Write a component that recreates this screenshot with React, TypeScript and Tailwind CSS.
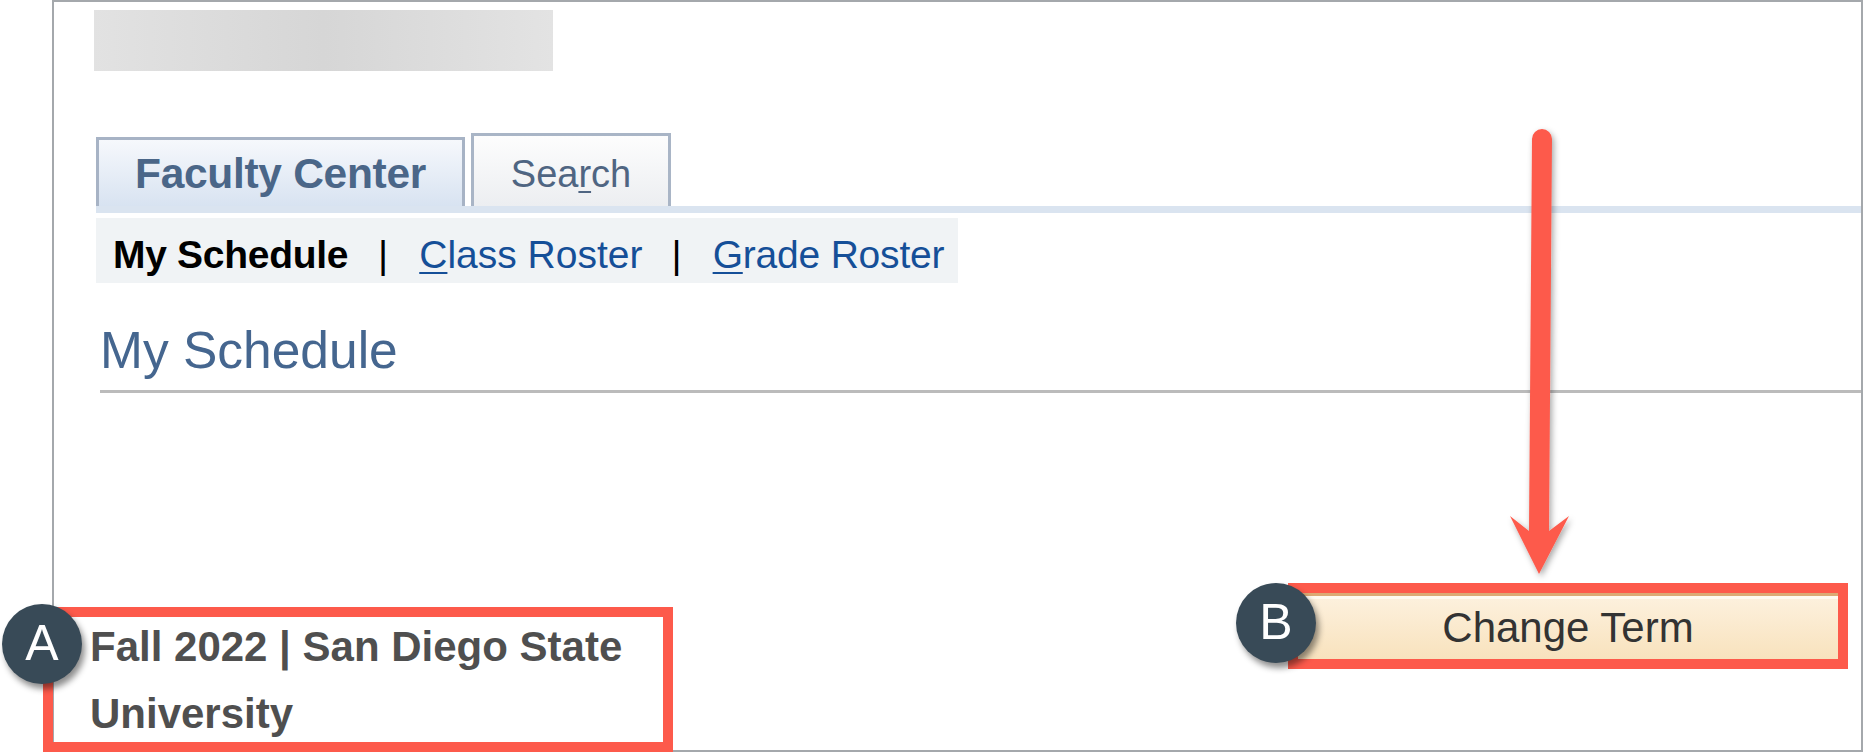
import type { ReactNode } from 'react'

const SANS = "font-['Liberation_Sans',Arial,sans-serif]"

function AccessKey({ children }: { children: ReactNode }) {
  return <span className="underline decoration-2 underline-offset-[4px]">{children}</span>
}

function Badge({ letter, className }: { letter: string; className: string }) {
  return (
    <div
      className={`absolute flex h-[80px] w-[80px] items-center justify-center rounded-full bg-[#384a57] text-[50px] leading-none text-white shadow-[3px_5px_6px_rgba(0,0,0,0.45)] ${className}`}
    >
      <span className="-mt-[2px]">{letter}</span>
    </div>
  )
}

function Arrow() {
  return (
    <svg className="pointer-events-none absolute left-[1490px] top-[110px]" width="110" height="490" viewBox="1490 110 110 490">
      <defs>
        <filter id="arrowShadow" x="-50%" y="-10%" width="200%" height="120%">
          <feDropShadow dx="2" dy="3" stdDeviation="3" floodColor="#000" floodOpacity="0.35" />
        </filter>
      </defs>
      <g filter="url(#arrowShadow)" fill="#fd5a4b">
        <path d="M1532 139 a10 10 0 0 1 20 0 L1549 531 L1569 516 L1539 574 L1510 516 L1529 531 Z" />
      </g>
    </svg>
  )
}

export default function App() {
  return (
    <div className={`relative h-[754px] w-[1864px] overflow-hidden bg-white ${SANS}`}>
      <div className="ml-[52px] h-[752px] w-[1811px] border-2 border-[#a4a8ac]">
        {/* blurred logo strip */}
        <div className="ml-[40px] mt-[8px] h-[61px] w-[459px] bg-linear-to-r from-[#e2e2e2] via-[#d6d6d6] to-[#e3e3e3]" />

        {/* tabs */}
        <div className="ml-[42px] mt-[62px] flex h-[73px] items-end">
          <div className="flex h-[69px] w-[369px] items-center justify-center border-x-[3px] border-t-[3px] border-[#a7b3c5] bg-linear-to-b from-[#f6f8fc] to-[#d8e3f1] pt-[2px]">
            <span className="text-[42.5px] font-bold tracking-[-0.3px] text-[#4a6688]">Faculty Center</span>
          </div>
          <div className="ml-[6px] flex h-[73px] w-[200px] items-center justify-center border-x-[3px] border-t-[3px] border-[#a9b5c6] bg-linear-to-b from-[#fdfdfd] to-[#eceef1] pt-[6px]">
            <span className="text-[38px] text-[#4f6582]">
              Sea<AccessKey>r</AccessKey>ch
            </span>
          </div>
        </div>
        <div className="ml-[42px] h-[7px] bg-[#dae4f0]" />

        {/* sub navigation */}
        <div className="ml-[42px] mt-[5px] flex h-[65px] w-[862px] items-center bg-[#f0f3f5] pl-[17px] pt-[10px] text-[39px]">
          <span className="font-bold tracking-[-0.3px] text-black">My Schedule</span>
          <span className="ml-[30px] text-black">|</span>
          <a className="ml-[31px] text-[#154f98]">
            <AccessKey>C</AccessKey>lass Roster
          </a>
          <span className="ml-[29px] text-black">|</span>
          <a className="ml-[31px] tracking-[-0.2px] text-[#154f98]">
            <AccessKey>G</AccessKey>rade Roster
          </a>
        </div>

        {/* page title */}
        <div className="ml-[46px] mt-[38px] border-b-[3px] border-[#bbbbbb] pb-[11px]">
          <h1 className="text-[51.5px] leading-[58px] text-[#45668f]">My Schedule</h1>
        </div>

        {/* term + change term */}
        <div className="mt-[190px] flex items-start justify-between">
          <div className="relative -ml-[11px] mt-[24px] h-[145px] w-[630px] border-[10px] border-[#fd5a4b]">
            <Badge letter="A" className="-left-[51px] -top-[13px]" />
            <p className="-mt-[4px] w-[580px] pl-[37px] text-[42px] font-bold leading-[67px] text-[#4f4f4f]">
              Fall 2022 | San Diego State University
            </p>
          </div>
          <div className="relative mr-[13px] h-[86px] w-[560px] border-[10px] border-[#fd5a4b]">
            <Badge letter="B" className="-left-[62px] -top-[10px]" />
            <button className="flex h-full w-full items-center justify-center border-t-[3px] border-[#dcaa74] bg-linear-to-b from-[#fdf1de] to-[#f8e2bd] shadow-[inset_0_3px_0_#fffaf0] text-[42px] text-[#333333]">
              Change Term
            </button>
          </div>
        </div>
      </div>

      <Arrow />
    </div>
  )
}
